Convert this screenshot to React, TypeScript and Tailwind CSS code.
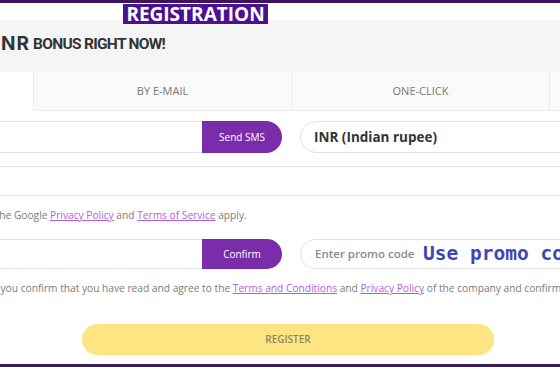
import React from 'react';

const tabs = ['BY PHONE', 'BY E-MAIL', 'ONE-CLICK', 'SOCIAL NETWORKS'];

const App: React.FC = () => {
  return (
    <div className="relative h-[367px] w-[560px] overflow-hidden bg-white font-['Open_Sans',sans-serif]">
      <div className="h-[3px] bg-[#3b1361]" />
      <div className="h-[17px]" />

      <div className="-ml-[225px] w-[1032px]">
        {/* bonus header */}
        <div className="flex h-[52px] items-center bg-[#f5f5f5] pl-[205px] pb-[3px]">
          <span className="w-[50px] text-right font-['Inter',sans-serif] text-[19px] font-bold tracking-[1px] text-[#333]">INR</span>
          <span className="ml-[3px] font-['Roboto',sans-serif] text-[15.5px] font-bold tracking-[-0.7px] text-[#333]">
            BONUS RIGHT NOW!
          </span>
        </div>

        {/* tabs */}
        <div className="grid h-[39px] grid-cols-4">
          {tabs.map((t, i) => (
            <div
              key={t}
              className={
                i === 0
                  ? 'flex items-center justify-center bg-white text-[11px] text-[#777]'
                  : 'flex items-center justify-center border-b border-l border-[#ececec] bg-[#fafafa] text-[11px] text-[#777]'
              }
            >
              {t}
            </div>
          ))}
        </div>

        {/* form */}
        <div className="px-[17px]">
          <div className="mt-[10px] grid grid-cols-2 gap-[18px]">
            <div className="flex h-[32px] rounded-full border border-[#e2e2e2] bg-white">
              <div className="flex-1" />
              <button className="-my-px -mr-px w-[80px] rounded-r-full bg-[#7b2cab] text-[10px] text-white">Send SMS</button>
            </div>
            <div className="flex h-[32px] items-center rounded-full border border-[#e2e2e2] bg-white pl-[13px]">
              <span className="text-[13.5px] font-bold text-[#333]">INR (Indian rupee)</span>
            </div>
          </div>

          <div className="mt-[13px] h-[30px] rounded-full border border-[#e2e2e2] bg-white" />

          <p className="mt-[11px] pl-[11px] text-[10.2px] leading-[16px] text-[#7a7a7a]">
            This site is protected by reCAPTCHA and the Google{' '}
            <span className="text-[#b160dd] underline">Privacy Policy</span> and{' '}
            <span className="text-[#b160dd] underline">Terms of Service</span> apply.
          </p>

          <div className="mt-[16px] grid grid-cols-2 gap-[18px]">
            <div className="flex h-[30px] rounded-full border border-[#e2e2e2] bg-white">
              <div className="flex-1" />
              <button className="-my-px -mr-px w-[80px] rounded-r-full bg-[#7b2cab] text-[10px] text-white">Confirm</button>
            </div>
            <div className="flex h-[30px] items-center rounded-full border border-[#e2e2e2] bg-white pl-[14px]">
              <span className="text-[11.5px] font-semibold text-[#8a8a8a]">Enter promo code</span>
            </div>
          </div>

          <p className="mt-[11px] pr-[10px] text-center text-[10.2px] leading-[16px] text-[#7a7a7a]">
            By clicking this button you confirm that you have read and agree to the{' '}
            <span className="text-[#b160dd] underline">Terms and Conditions</span> and{' '}
            <span className="text-[#b160dd] underline">Privacy Policy</span> of the company and confirm that you are of legal age
          </p>

          <button className="ml-[290px] mt-[28px] block h-[31px] w-[412px] rounded-full bg-[#fde581] text-[10px] font-semibold text-[#8b8566]">
            REGISTER
          </button>
        </div>
      </div>

      <div className="absolute bottom-0 left-0 h-[3px] w-full bg-[#3d1a5c]" />

      {/* overlays */}
      <div className="absolute left-[123px] top-[4px] flex h-[20px] w-[145px] items-center justify-center bg-[#4c1190] text-[19px] font-bold leading-none text-white">
        REGISTRATION
      </div>
      <div className="absolute left-[423px] top-[244px] whitespace-nowrap font-['DejaVu_Sans_Mono',monospace] text-[19.5px] font-bold leading-none text-[#4046b5]">
        Use promo code
      </div>
    </div>
  );
};

export default App;
